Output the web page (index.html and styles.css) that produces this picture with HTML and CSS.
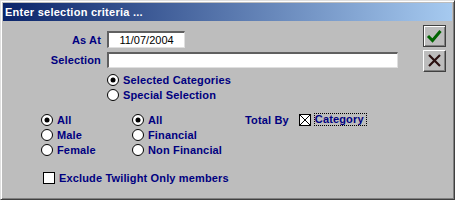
FILE: index.html
```html
<!DOCTYPE html>
<html>
<head>
<meta charset="utf-8">
<link rel="stylesheet" href="styles.css">
</head>
<body>
<div class="window">
  <div class="titlebar">Enter selection criteria ...</div>
  <div class="content">
    <div class="form">
      <div class="field-row r1">
        <span class="label">As At</span>
        <div class="input date">11/07/2004</div>
      </div>
      <div class="field-row r2">
        <span class="label">Selection</span>
        <div class="input wide"></div>
      </div>
      <div class="radios sel">
        <div class="opt"><svg class="radio" viewBox="0 0 12 12"><circle cx="6" cy="6" r="5.5" fill="#fff" stroke="#000"/><circle cx="6" cy="6" r="2.5" fill="#000"/></svg><span>Selected Categories</span></div>
        <div class="opt"><svg class="radio" viewBox="0 0 12 12"><circle cx="6" cy="6" r="5.5" fill="#fff" stroke="#000"/></svg><span>Special Selection</span></div>
      </div>
      <div class="groups">
        <div class="col c1">
          <div class="opt"><svg class="radio" viewBox="0 0 12 12"><circle cx="6" cy="6" r="5.5" fill="#fff" stroke="#000"/><circle cx="6" cy="6" r="2.5" fill="#000"/></svg><span>All</span></div>
          <div class="opt"><svg class="radio" viewBox="0 0 12 12"><circle cx="6" cy="6" r="5.5" fill="#fff" stroke="#000"/></svg><span>Male</span></div>
          <div class="opt"><svg class="radio" viewBox="0 0 12 12"><circle cx="6" cy="6" r="5.5" fill="#fff" stroke="#000"/></svg><span>Female</span></div>
        </div>
        <div class="col c2">
          <div class="opt"><svg class="radio" viewBox="0 0 12 12"><circle cx="6" cy="6" r="5.5" fill="#fff" stroke="#000"/><circle cx="6" cy="6" r="2.5" fill="#000"/></svg><span>All</span></div>
          <div class="opt"><svg class="radio" viewBox="0 0 12 12"><circle cx="6" cy="6" r="5.5" fill="#fff" stroke="#000"/></svg><span>Financial</span></div>
          <div class="opt"><svg class="radio" viewBox="0 0 12 12"><circle cx="6" cy="6" r="5.5" fill="#fff" stroke="#000"/></svg><span>Non Financial</span></div>
        </div>
        <div class="col c3">
          <div class="opt">
            <span class="total">Total By</span>
            <svg class="check" viewBox="0 0 12 12"><rect x="0.5" y="0.5" width="11" height="11" fill="#fff" stroke="#000"/><path d="M1 1 L11 11 M11 1 L1 11" stroke="#000" stroke-width="1"/></svg>
            <span class="focus">Category</span>
          </div>
        </div>
      </div>
      <div class="opt exclude"><svg class="check" viewBox="0 0 12 12"><rect x="0.5" y="0.5" width="11" height="11" fill="#fff" stroke="#000"/></svg><span>Exclude Twilight Only members</span></div>
    </div>
    <div class="buttons">
      <div class="btn ok"><svg viewBox="0 0 23 22" width="23" height="22"><path d="M5 11 L9.5 15.5 L17.5 6" fill="none" stroke="#006400" stroke-width="3"/></svg></div>
      <div class="btn cancel"><svg viewBox="0 0 23 22" width="23" height="22"><path d="M6 5 L17 16 M17 5 L6 16" fill="none" stroke="#2a1010" stroke-width="2.2"/></svg></div>
    </div>
  </div>
</div>
</body>
</html>
```
FILE: styles.css
```css
html, body {
  margin: 0;
  padding: 0;
  background: #bdbdbd;
}
.window {
  width: 455px;
  height: 200px;
  box-sizing: border-box;
  background: #bdbdbd;
  border-top: 1px solid #dfdfdf;
  border-left: 1px solid #dfdfdf;
  border-right: 1px solid #404040;
  border-bottom: 1px solid #404040;
  box-shadow: inset 1px 1px #ffffff, inset -1px -1px #808080;
  padding: 2px;
  display: flex;
  flex-direction: column;
  font-family: "Liberation Sans", Arial, sans-serif;
}
.titlebar {
  height: 18px;
  line-height: 18px;
  padding-left: 2px;
  background: linear-gradient(to right, #0a246a, #a6caf0);
  color: #fff;
  font-weight: bold;
  font-size: 11px;
  letter-spacing: 0.25px;
  white-space: nowrap;
}
.content {
  flex: 1;
  display: flex;
}
.form {
  flex: 1;
  display: flex;
  flex-direction: column;
  color: #000080;
  font-weight: bold;
  font-size: 11px;
  letter-spacing: 0.15px;
}
.field-row {
  display: flex;
  align-items: center;
  gap: 6px;
}
.r1 { margin-top: 10px; }
.r2 { margin-top: 4px; }
.label {
  width: 98px;
  text-align: right;
}
.input {
  box-sizing: border-box;
  background: #fff;
  border-top: 2px solid #606060;
  border-left: 2px solid #606060;
  border-right: 1px solid #dfdfdf;
  border-bottom: 1px solid #dfdfdf;
}
.date {
  width: 78px;
  height: 17px;
  color: #000;
  font-weight: normal;
  letter-spacing: 0;
  text-align: center;
  line-height: 14px;
}
.wide {
  width: 291px;
  height: 16px;
}
.opt {
  display: flex;
  align-items: center;
  gap: 4px;
  height: 15px;
  white-space: nowrap;
}
.radio, .check {
  width: 12px;
  height: 12px;
  flex: none;
}
.radios {
  margin-top: 4px;
  margin-left: 104px;
}
.groups {
  display: flex;
  margin-top: 10px;
  margin-left: 38px;
}
.c1 { width: 91px; }
.c2 { width: 113px; }
.total { margin-right: 6px; }
.focus {
  border: 1px dotted #000;
  padding: 0 2px 0 0;
  line-height: 11px;
  margin-left: -1px;
}
.exclude {
  margin-top: 13px;
  margin-left: 40px;
}
.buttons {
  display: flex;
  flex-direction: column;
  gap: 3px;
  margin-top: 4px;
  margin-right: 6px;
}
.btn {
  width: 23px;
  height: 22px;
  box-sizing: border-box;
  background: #bdbdbd;
  display: flex;
  align-items: center;
  justify-content: center;
  overflow: hidden;
}
.btn svg { flex: none; }
.ok {
  border: 1px solid #404040;
  box-shadow: inset 1px 1px #ffffff, inset -1px -1px #808080;
}
.cancel {
  border-top: 1px solid #ffffff;
  border-left: 1px solid #ffffff;
  border-right: 1px solid #404040;
  border-bottom: 1px solid #404040;
  box-shadow: inset -1px -1px #808080;
}
```
